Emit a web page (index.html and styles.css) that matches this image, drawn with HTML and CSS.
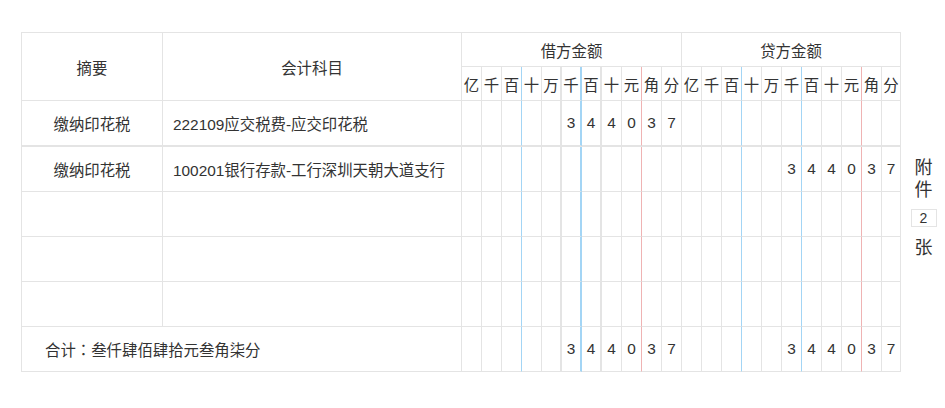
FILE: index.html
```html
<!DOCTYPE html>
<html lang="zh-CN">
<head>
<meta charset="utf-8">
<title>记账凭证</title>
<link rel="stylesheet" href="styles.css">
</head>
<body>
<div class="page">
  <div class="voucher">
    <div class="grid head">
      <div class="c zy span-2r">摘要</div>
      <div class="c km span-2r">会计科目</div>
      <div class="c side-title jf">借方金额</div>
      <div class="c side-title df">贷方金额</div>
      <div class="d">亿</div><div class="d">千</div><div class="d b">百</div><div class="d">十</div><div class="d w">万</div><div class="d b w">千</div><div class="d w">百</div><div class="d">十</div><div class="d r">元</div><div class="d">角</div><div class="d">分</div>
      <div class="d">亿</div><div class="d">千</div><div class="d b">百</div><div class="d">十</div><div class="d">万</div><div class="d b">千</div><div class="d">百</div><div class="d">十</div><div class="d r">元</div><div class="d">角</div><div class="d">分</div>
      <div class="c">缴纳印花税</div>
      <div class="c text">222109应交税费-应交印花税</div>
      <div class="d"></div><div class="d"></div><div class="d b"></div><div class="d"></div><div class="d w"></div><div class="d b w">3</div><div class="d w">4</div><div class="d">4</div><div class="d r">0</div><div class="d">3</div><div class="d">7</div>
      <div class="d"></div><div class="d"></div><div class="d b"></div><div class="d"></div><div class="d"></div><div class="d b"></div><div class="d"></div><div class="d"></div><div class="d r"></div><div class="d"></div><div class="d"></div>
    </div>
    <div class="grid body">
      <div class="c">缴纳印花税</div>
      <div class="c text">100201银行存款-工行深圳天朝大道支行</div>
      <div class="d"></div><div class="d"></div><div class="d b"></div><div class="d"></div><div class="d w"></div><div class="d b w"></div><div class="d w"></div><div class="d"></div><div class="d r"></div><div class="d"></div><div class="d"></div>
      <div class="d"></div><div class="d"></div><div class="d b"></div><div class="d"></div><div class="d"></div><div class="d b">3</div><div class="d">4</div><div class="d">4</div><div class="d r">0</div><div class="d">3</div><div class="d">7</div>

      <div class="c"></div>
      <div class="c text"></div>
      <div class="d"></div><div class="d"></div><div class="d b"></div><div class="d"></div><div class="d w"></div><div class="d b w"></div><div class="d w"></div><div class="d"></div><div class="d r"></div><div class="d"></div><div class="d"></div>
      <div class="d"></div><div class="d"></div><div class="d b"></div><div class="d"></div><div class="d"></div><div class="d b"></div><div class="d"></div><div class="d"></div><div class="d r"></div><div class="d"></div><div class="d"></div>

      <div class="c"></div>
      <div class="c text"></div>
      <div class="d"></div><div class="d"></div><div class="d b"></div><div class="d"></div><div class="d w"></div><div class="d b w"></div><div class="d w"></div><div class="d"></div><div class="d r"></div><div class="d"></div><div class="d"></div>
      <div class="d"></div><div class="d"></div><div class="d b"></div><div class="d"></div><div class="d"></div><div class="d b"></div><div class="d"></div><div class="d"></div><div class="d r"></div><div class="d"></div><div class="d"></div>

      <div class="c"></div>
      <div class="c text"></div>
      <div class="d"></div><div class="d"></div><div class="d b"></div><div class="d"></div><div class="d w"></div><div class="d b w"></div><div class="d w"></div><div class="d"></div><div class="d r"></div><div class="d"></div><div class="d"></div>
      <div class="d"></div><div class="d"></div><div class="d b"></div><div class="d"></div><div class="d"></div><div class="d b"></div><div class="d"></div><div class="d"></div><div class="d r"></div><div class="d"></div><div class="d"></div>

      <div class="c total">合计<span class="colon">：</span>叁仟肆佰肆拾元叁角柒分</div>
      <div class="d"></div><div class="d"></div><div class="d b"></div><div class="d"></div><div class="d w"></div><div class="d b w">3</div><div class="d w">4</div><div class="d">4</div><div class="d r">0</div><div class="d">3</div><div class="d">7</div>
      <div class="d"></div><div class="d"></div><div class="d b"></div><div class="d"></div><div class="d"></div><div class="d b">3</div><div class="d">4</div><div class="d">4</div><div class="d r">0</div><div class="d">3</div><div class="d">7</div>
    </div>
  </div>
  <div class="attach">
    <span class="attach-label">附</span>
    <span class="attach-label">件</span>
    <span class="attach-count">2</span>
    <span class="attach-label">张</span>
  </div>
</div>
</body>
</html>
```

FILE: styles.css
```css
* {
  box-sizing: border-box;
}

html, body {
  margin: 0;
  padding: 0;
  background: #ffffff;
}

body {
  font-family: "Liberation Sans", "Noto Sans CJK SC", sans-serif;
  font-size: 15.4px;
  color: #333333;
}

.page {
  display: flex;
  align-items: flex-start;
  padding: 32px 0 0 21px;
}

.voucher {
  display: flex;
  flex-direction: column;
}

.grid {
  display: grid;
  grid-template-columns: 141px 299px repeat(21, 20px) 19px;
  border-left: 1px solid #e4e4e4;
  border-top: 1px solid #e4e4e4;
}

.head {
  grid-template-rows: 34px 34px 45px;
}

.body {
  grid-template-rows: repeat(5, 45px);
}

.c,
.d {
  display: flex;
  align-items: center;
  justify-content: center;
  border-right: 1px solid #e4e4e4;
  border-bottom: 1px solid #e4e4e4;
  white-space: nowrap;
  overflow: hidden;
}

.span-2r {
  grid-row: span 2;
}

.jf,
.df {
  grid-column: span 11;
}

.text {
  justify-content: flex-start;
  padding-left: 10px;
}

.total {
  grid-column: span 2;
  justify-content: flex-start;
  padding-left: 23px;
}

.colon {
  font-family: "Noto Sans CJK TC", "Noto Sans CJK SC", sans-serif;
}

.d.b {
  border-right-color: #a3d5f5;
}

.d.r {
  border-right-color: #efb3b3;
}

.d.w {
  border-right-width: 2px;
}

.attach {
  width: 44px;
  display: flex;
  flex-direction: column;
  align-items: center;
  padding-top: 125px;
}

.attach-label {
  font-size: 18px;
  line-height: 22px;
  padding-left: 1px;
}

.attach-count {
  width: 26px;
  height: 18px;
  margin: 8px 0 10px 1px;
  border: 1px solid #e4e4e4;
  font-size: 14px;
  line-height: 16px;
  text-align: center;
}
```
